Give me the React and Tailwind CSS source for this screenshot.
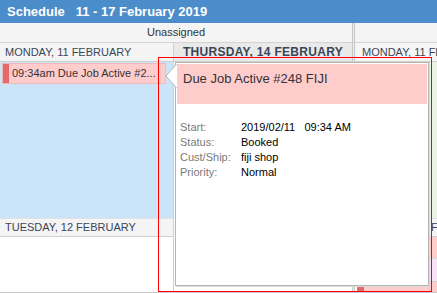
import React from 'react';

const details = [
  ['Start:', '2019/02/11\u00a0\u00a0\u00a009:34 AM'],
  ['Status:', 'Booked'],
  ['Cust/Ship:', 'fiji shop'],
  ['Priority:', 'Normal'],
];

const DayHeader = ({ label, bold, className = '' }) => (
  <div
    className={`h-[19px] shrink-0 flex items-center border-b border-[#d0d0d0] text-[#3a4658] whitespace-nowrap overflow-hidden ${
      bold ? 'font-bold text-[12px] tracking-[0.3px]' : 'text-[11px]'
    } ${className}`}
  >
    {label}
  </div>
);

const JobPopup = () => (
  <div className="absolute left-[175px] top-[62px] w-[254px] h-[224px] bg-white border border-[#b4b4b4] shadow-[1px_1px_0_#dcdcdc]">
    {/* arrow */}
    <svg className="absolute left-[-11px] top-[0px]" width="12" height="28" viewBox="0 0 12 28">
      <path d="M11.5 1 L1 13 L11.5 25" fill="#fff" stroke="#b4b4b4" strokeWidth="1" />
    </svg>
    <div className="mx-[1px] mt-[1px] h-[40px] bg-[#ffcccc] pl-[6px] pt-[5px] text-[13px] text-[#333]">
      Due Job Active #248 FIJI
    </div>
    <div className="mt-[16px] pl-[4px] text-[11px] leading-[15px]">
      {details.map(([label, value]) => (
        <div key={label} className="flex">
          <span className="w-[61px] text-[#7a7a7a]">{label}</span>
          <span className="text-black whitespace-pre">{value}</span>
        </div>
      ))}
    </div>
  </div>
);

export default function App() {
  return (
    <div className="relative w-[437px] h-[293px] overflow-hidden bg-white font-['Liberation_Sans',Arial,sans-serif]">
      {/* title bar */}
      <div className="h-[23px] bg-[#4b8dcb] flex items-center pl-[7px] text-white font-bold text-[13px] whitespace-pre">
        Schedule   11 - 17 February 2019
      </div>

      <div className="flex h-[270px] border-b border-[#c8c8c8]">
        {/* Unassigned resource */}
        <div className="w-[353px] shrink-0 flex flex-col border-r border-[#c4c4c4]">
          <div className="h-[20px] shrink-0 bg-[#f4f4f4] border-b border-[#d4d4d4] flex items-center justify-center text-[11px] text-[#333]">
            Unassigned
          </div>
          <div className="flex flex-1">
            {/* Monday */}
            <div className="w-[174px] shrink-0 flex flex-col border-r border-[#d0d0d0]">
              <DayHeader label="MONDAY, 11 FEBRUARY" className="bg-[#f4f4f4] pl-[5px]" />
              <div className="h-[156px] shrink-0 bg-[#cce4f7] pt-[1px] pl-[2px] pr-[7px]">
                <div className="h-[21px] flex items-stretch bg-[#ffcccc] border border-[#f0b8b8]">
                  <div className="w-[6px] bg-[#e36a6a]" />
                  <span className="pl-[3px] flex items-center text-[11px] text-[#333] whitespace-nowrap">
                    09:34am Due Job Active #2...
                  </span>
                </div>
              </div>
              <DayHeader label="TUESDAY, 12 FEBRUARY" className="bg-[#f4f4f4] pl-[5px] border-t border-t-[#e2e2e2]" />
              <div className="flex-1 bg-white" />
            </div>
            {/* Thursday */}
            <div className="flex-1 min-w-0 flex flex-col">
              <DayHeader label="THURSDAY, 14 FEBRUARY" bold className="bg-[#e9e9e9] justify-center" />
              <div className="flex-1 bg-white" />
            </div>
          </div>
        </div>

        {/* divider */}
        <div className="w-[2px] shrink-0 bg-[#f0f0f0] border-r border-[#c4c4c4]" />

        {/* second resource */}
        <div className="flex-1 min-w-0 flex flex-col">
          <div className="h-[20px] shrink-0 bg-[#f4f4f4] border-b border-[#d4d4d4]" />
          <DayHeader label="MONDAY, 11 FEBRUARY" className="bg-[#f6f6f6] pl-[7px]" />
          <div className="flex flex-1 min-h-0">
            <div className="w-[75px] shrink-0 flex flex-col border-r border-[#d0d0d0]">
              <div className="h-[223px] shrink-0 bg-white" />
              <div className="flex-1 flex bg-[#ffcccc] ml-[2px]">
                <div className="w-[7px] bg-[#e36a6a]" />
              </div>
            </div>
            <div className="flex-1 min-w-0 flex flex-col">
              <div className="h-[156px] shrink-0 bg-[#ebf3e4]" />
              <DayHeader label="FRIDAY, 15 FEBRUARY" className="bg-[#f4f4f4] pl-[1px] border-t border-t-[#e2e2e2]" />
              <div className="h-[22px] shrink-0 bg-[#ffcccc] border-b border-[#d8d8d8]" />
              <div className="h-[23px] shrink-0 bg-[#f8e2f8] border-b border-[#d0d0d0]" />
              <div className="flex-1 bg-[#ffcccc]" />
            </div>
          </div>
        </div>
      </div>

      <JobPopup />

      {/* selection outline */}
      <div className="absolute left-[158px] top-[57px] w-[274px] h-[235px] border border-[#ff0000] pointer-events-none" />
    </div>
  );
}
